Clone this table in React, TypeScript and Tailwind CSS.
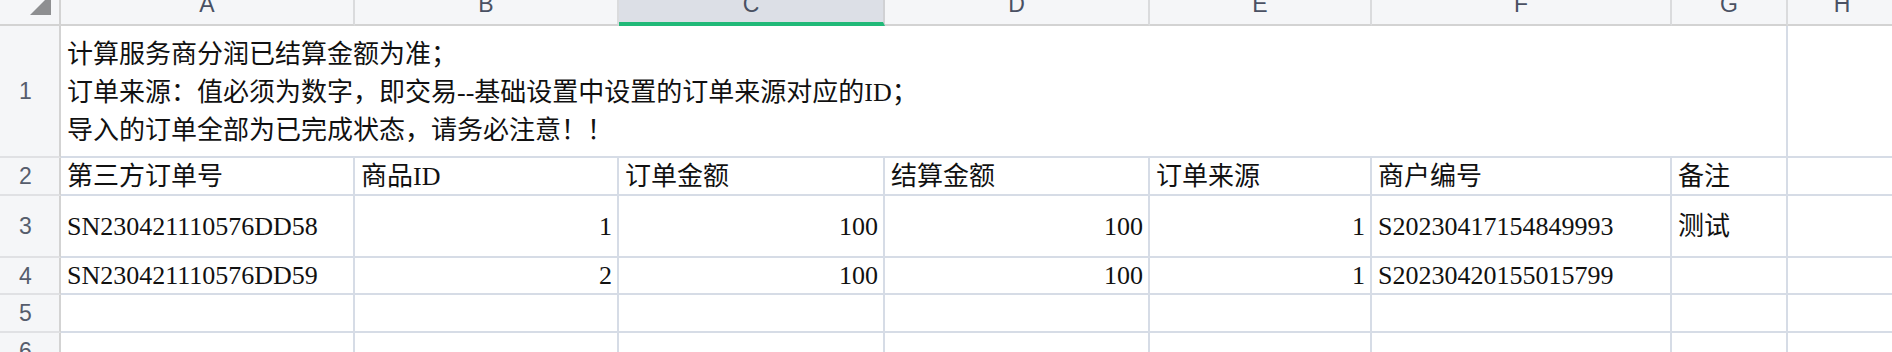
import * as React from "react";

const letters = ["A", "B", "C", "D", "E", "F", "G", "H"];

type Cell = { v: string; num?: boolean };

const rows: { n: number; cells: Cell[] }[] = [
  {
    n: 2,
    cells: [
      { v: "第三方订单号" },
      { v: "商品ID" },
      { v: "订单金额" },
      { v: "结算金额" },
      { v: "订单来源" },
      { v: "商户编号" },
      { v: "备注" },
      { v: "" },
    ],
  },
  {
    n: 3,
    cells: [
      { v: "SN230421110576DD58" },
      { v: "1", num: true },
      { v: "100", num: true },
      { v: "100", num: true },
      { v: "1", num: true },
      { v: "S20230417154849993" },
      { v: "测试" },
      { v: "" },
    ],
  },
  {
    n: 4,
    cells: [
      { v: "SN230421110576DD59" },
      { v: "2", num: true },
      { v: "100", num: true },
      { v: "100", num: true },
      { v: "1", num: true },
      { v: "S20230420155015799" },
      { v: "" },
      { v: "" },
    ],
  },
  { n: 5, cells: Array.from({ length: 8 }, () => ({ v: "" })) },
  { n: 6, cells: Array.from({ length: 8 }, () => ({ v: "" })) },
];

function RowHead({ n }: { n: number }) {
  return (
    <div className="flex items-center justify-center pr-[8px] pt-[1px] bg-[#f5f6f8] border-r-2 border-r-[#d3d3d3] border-b-2 border-b-[#e0e1e4] font-['Liberation_Sans',sans-serif] text-[23px] leading-none text-[#565d6c]">
      {n}
    </div>
  );
}

export default function App() {
  return (
    <div className="w-[1892px] h-[352px] overflow-hidden bg-white">
      <div className="grid grid-cols-[61px_294px_264px_266px_265px_222px_300px_116px_110px] grid-rows-[26px_132px_38px_62px_37px_38px_38px] font-['Liberation_Serif','Noto_Sans_CJK_SC',serif] text-[26px] text-[#111]">
        {/* corner */}
        <div className="flex items-end justify-end pr-[8px] pb-[9px] bg-[#f5f6f8] border-r-2 border-b-2 border-[#d3d3d3]">
          <svg width="21" height="21" viewBox="0 0 21 21" className="shrink-0">
            <polygon points="21,0 21,21 0,21" fill="#8e8f91" />
          </svg>
        </div>
        {letters.map((l) => (
          <div
            key={l}
            className={
              l === "C"
                ? "flex justify-center bg-[#dcdfe6] border-r-2 border-r-[#d0d1d4] border-b-4 border-b-[#21b978] overflow-hidden"
                : "flex justify-center bg-[#f5f6f8] border-r-2 border-r-[#dadbdd] border-b-2 border-b-[#d3d3d3] overflow-hidden"
            }
          >
            <span className="-mt-[7px] font-['Liberation_Sans',sans-serif] text-[23px] leading-[23px] text-[#4a5163]">
              {l}
            </span>
          </div>
        ))}

        {/* row 1: A1:G1 merged */}
        <RowHead n={1} />
        <div className="col-span-7 flex flex-col justify-center pl-[6px] pt-[3px] border-r-2 border-b-2 border-[#d6dce6] leading-[38px] whitespace-nowrap">
          <div>计算服务商分润已结算金额为准；</div>
          <div>订单来源：值必须为数字，即交易--基础设置中设置的订单来源对应的ID；</div>
          <div>导入的订单全部为已完成状态，请务必注意！！</div>
        </div>
        <div className="border-b-2 border-[#d6dce6]" />

        {rows.map((r) => (
          <React.Fragment key={r.n}>
            <RowHead n={r.n} />
            {r.cells.map((c, i) => (
              <div
                key={i}
                className={
                  c.num
                    ? "flex items-center justify-end pr-[5px] border-r-2 border-b-2 border-[#d6dce6] whitespace-nowrap"
                    : "flex items-center pl-[6px] border-r-2 border-b-2 border-[#d6dce6] whitespace-nowrap overflow-hidden"
                }
              >
                {c.v}
              </div>
            ))}
          </React.Fragment>
        ))}
      </div>
    </div>
  );
}
